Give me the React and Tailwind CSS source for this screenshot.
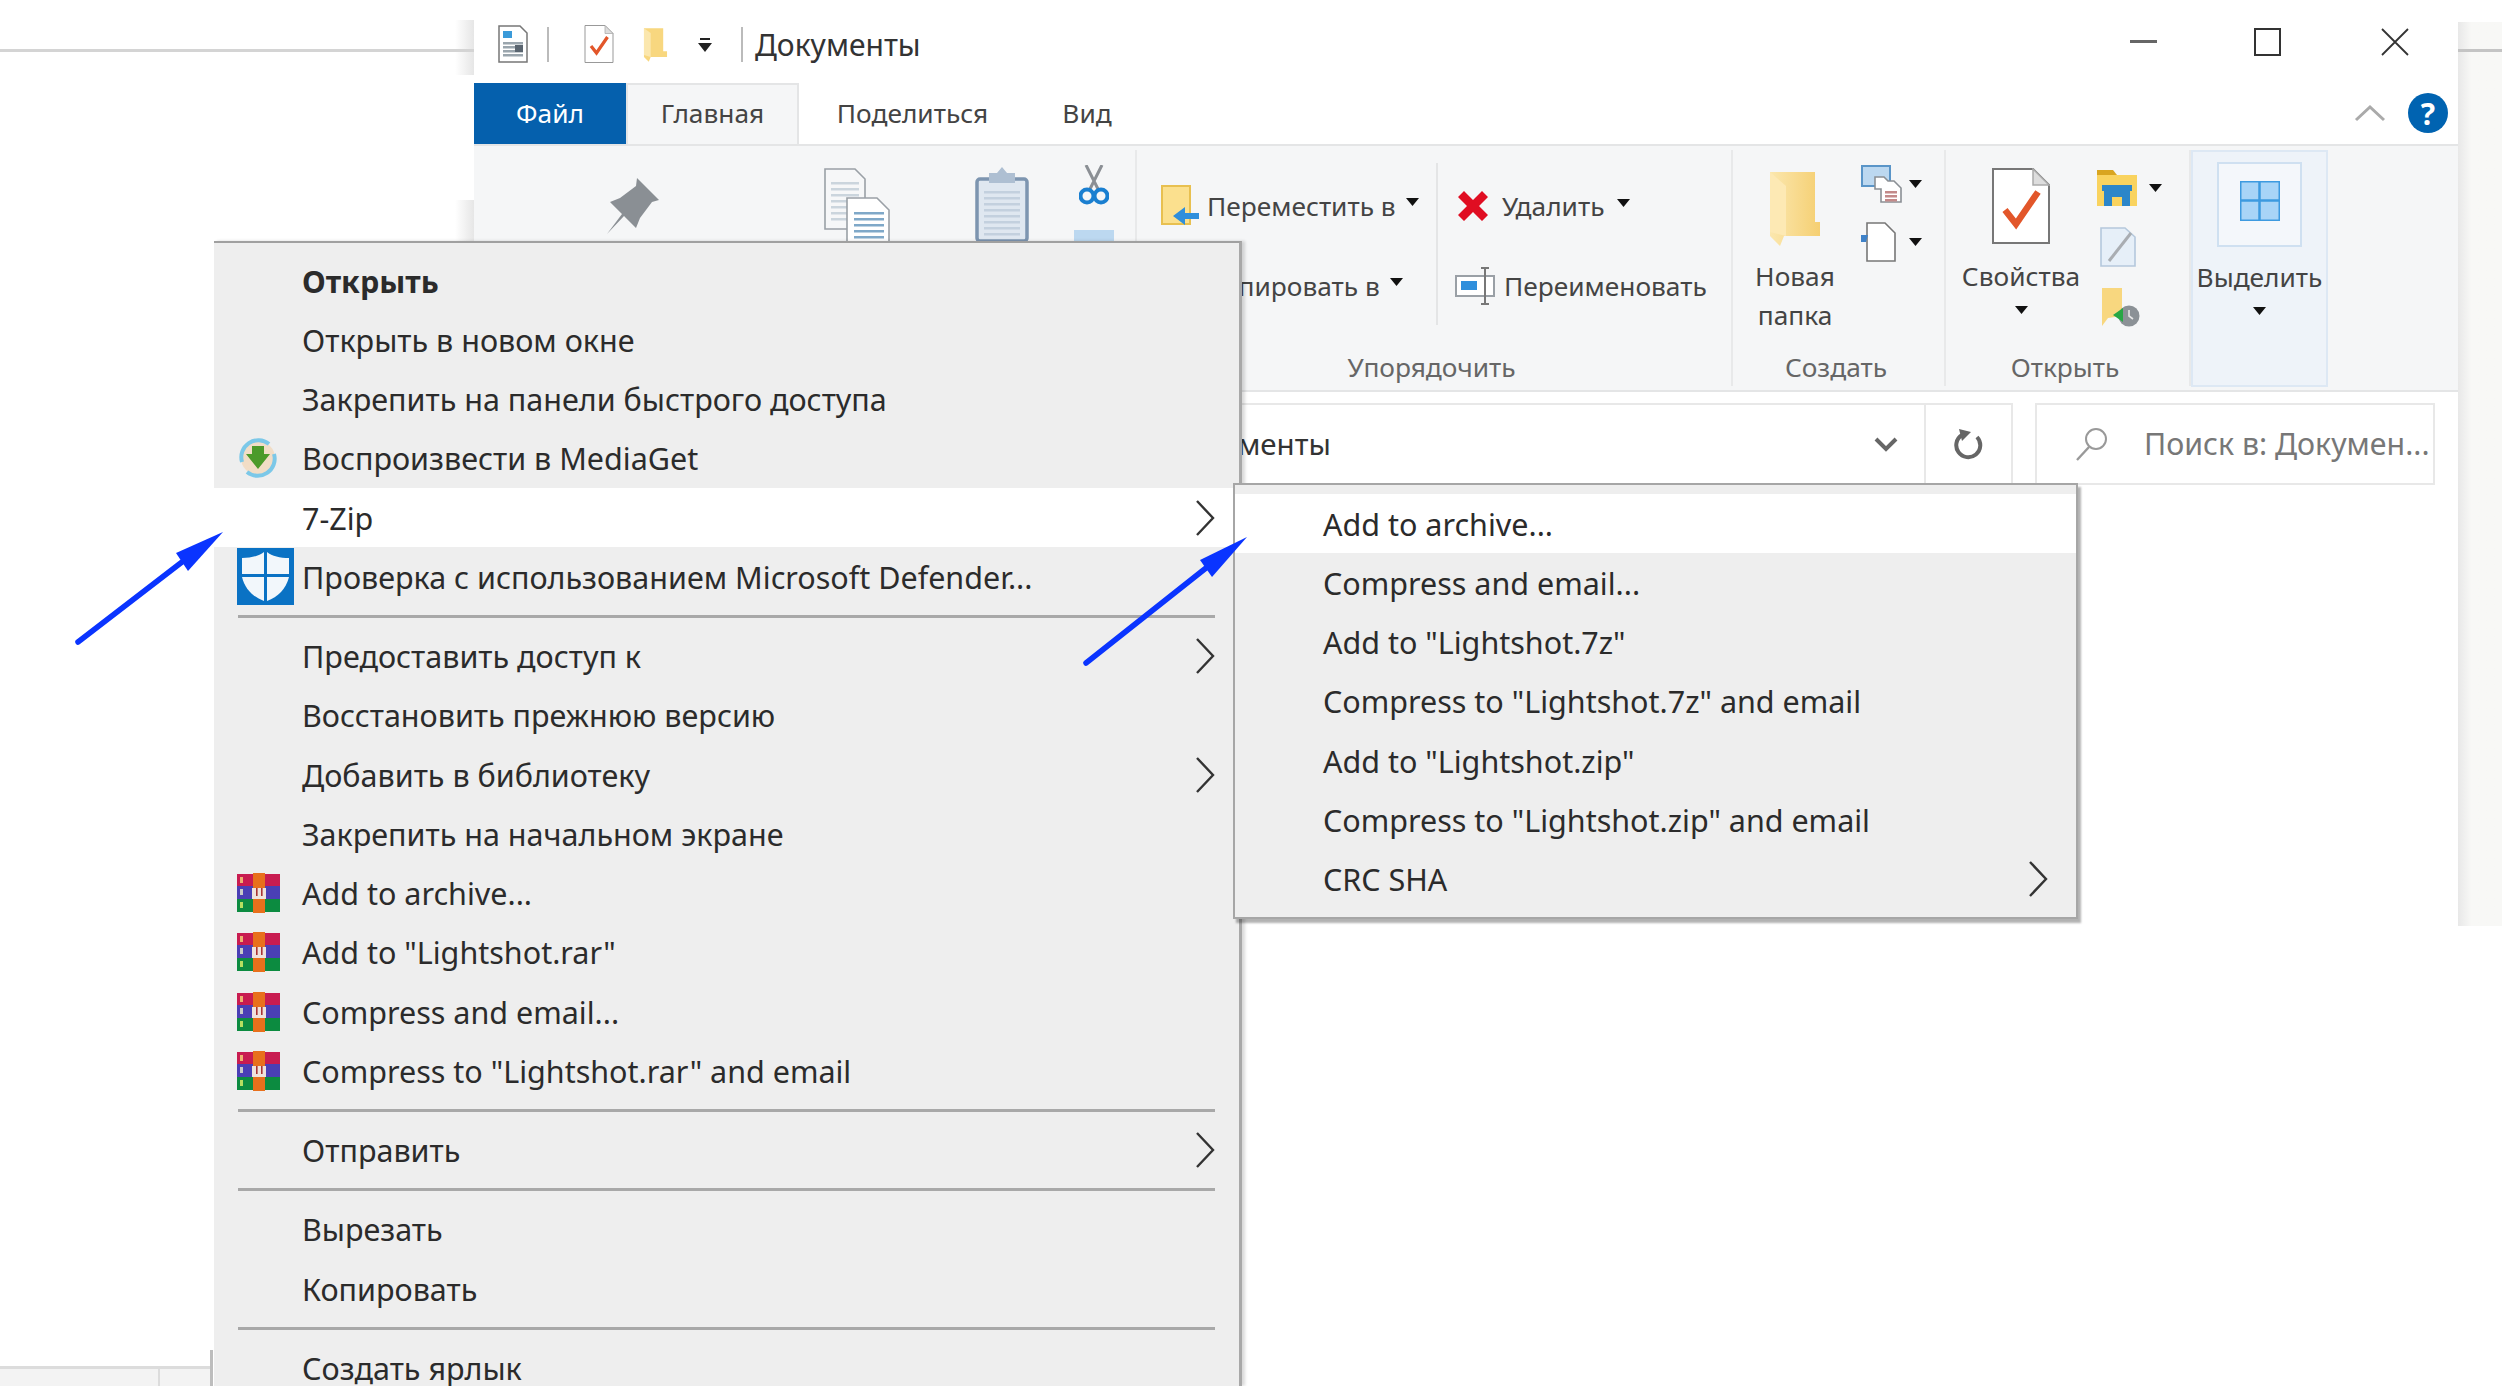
import { Fragment } from 'react';

const Drop = ({ className = '' }) => (
  <svg width="13" height="8" viewBox="0 0 13 8" className={`shrink-0 ${className}`}>
    <path d="M0 0h13L6.5 8z" fill="#111" />
  </svg>
);

const Chevron = ({ className = '' }) => (
  <svg width="20" height="38" viewBox="0 0 20 38" className={`shrink-0 ${className}`}>
    <path d="M2 2l16 17L2 36" fill="none" stroke="#333" strokeWidth="2.4" />
  </svg>
);

const FolderSmall = ({ w = 26, h = 36 }) => (
  <svg width={w} height={h} viewBox="0 0 26 36" className="shrink-0">
    <path d="M1 1h20v24h4v6H8l-2 5-5-5z" fill="#f8d77f" />
    <path d="M1 1l7 5v25l-7-2z" fill="#fbe7ae" />
  </svg>
);

const Doc = ({ w, h, stroke = '#777', children, fill = '#fff' }) => (
  <svg width={w} height={h} viewBox="0 0 58 76" className="shrink-0">
    <path d="M1 1h40l16 16v58H1z" fill={fill} stroke={stroke} strokeWidth="2" />
    <path d="M41 1v16h16z" fill="#ddd" stroke="#aaa" strokeWidth="1.5" />
    {children}
  </svg>
);

const Check = () => <path d="M13 42l11 14 22-32" fill="none" stroke="#e2562a" strokeWidth="6.5" />;

const Lines = ({ x, y, w, n, gap = 6, color = '#7fa8c8' }) => (
  <>
    {Array.from({ length: n }).map((_, i) => (
      <rect key={i} x={x} y={y + i * gap} width={w} height="2.5" fill={color} />
    ))}
  </>
);

const RarIcon = () => (
  <svg width="43" height="40" viewBox="0 0 43 40">
    <rect x="0" y="1" width="43" height="12" fill="#c81c50" />
    <rect x="0" y="13" width="43" height="13" fill="#4a3fb5" />
    <rect x="0" y="26" width="43" height="13" fill="#0c8b40" />
    <rect x="16" y="0" width="12" height="40" fill="#e8701c" />
    <rect x="15" y="15" width="14" height="11" fill="#eee3dc" />
    <rect x="19" y="15" width="1.6" height="8" fill="#a33" />
    <rect x="24" y="15" width="1.6" height="8" fill="#a33" />
    <rect x="3" y="4" width="3" height="6" fill="#eeb070" />
    <rect x="3" y="16" width="3" height="6" fill="#c9c9c9" />
    <rect x="3" y="29" width="3" height="6" fill="#b6df60" />
  </svg>
);

const MediaGetIcon = () => (
  <svg width="42" height="40" viewBox="0 0 42 40">
    <circle cx="21" cy="20" r="17" fill="#f1ddc6" />
    <path d="M5 24A17 17 0 0 1 32 6" fill="none" stroke="#7cc8e8" strokeWidth="4" />
    <path d="M37 16A17 17 0 0 1 10 34" fill="none" stroke="#7cc8e8" strokeWidth="4" />
    <path d="M15 8h12v8h6L21 31 9 16h6z" fill="#4c9a2a" />
  </svg>
);

const DefenderIcon = () => (
  <svg width="57" height="57" viewBox="0 0 57 57">
    <rect width="57" height="57" fill="#0a72c4" />
    <path d="M27 4v22H5V10c9 0 17-2 22-6z" fill="#f2f7fb" />
    <path d="M30 4v22h22V10c-9 0-17-2-22-6z" fill="#f2f7fb" />
    <path d="M5 29h22v24C16 49 8 41 5 29z" fill="#f2f7fb" />
    <path d="M52 29H30v24c11-4 19-12 22-24z" fill="#f2f7fb" />
  </svg>
);

const mainMenu = [
  [
    { label: 'Открыть', bold: true },
    { label: 'Открыть в новом окне' },
    { label: 'Закрепить на панели быстрого доступа' },
    { label: 'Воспроизвести в MediaGet', icon: <MediaGetIcon /> },
    { label: '7-Zip', arrow: true, active: true },
    { label: 'Проверка с использованием Microsoft Defender...', icon: <DefenderIcon /> },
  ],
  [
    { label: 'Предоставить доступ к', arrow: true },
    { label: 'Восстановить прежнюю версию' },
    { label: 'Добавить в библиотеку', arrow: true },
    { label: 'Закрепить на начальном экране' },
    { label: 'Add to archive...', icon: <RarIcon /> },
    { label: 'Add to "Lightshot.rar"', icon: <RarIcon /> },
    { label: 'Compress and email...', icon: <RarIcon /> },
    { label: 'Compress to "Lightshot.rar" and email', icon: <RarIcon /> },
  ],
  [{ label: 'Отправить', arrow: true }],
  [{ label: 'Вырезать' }, { label: 'Копировать' }],
  [{ label: 'Создать ярлык' }],
];

const subMenu = [
  { label: 'Add to archive...', active: true },
  { label: 'Compress and email...' },
  { label: 'Add to "Lightshot.7z"' },
  { label: 'Compress to "Lightshot.7z" and email' },
  { label: 'Add to "Lightshot.zip"' },
  { label: 'Compress to "Lightshot.zip" and email' },
  { label: 'CRC SHA', arrow: true },
];

const MenuRow = ({ item, textLeft, arrowRight }) => (
  <div className={`flex h-[59.25px] items-center ${item.active ? 'bg-white' : ''}`}>
    <div className={`flex shrink-0 items-center pl-[23px] ${textLeft}`}>{item.icon}</div>
    <span className={`whitespace-nowrap leading-[32px] ${item.bold ? 'font-bold' : ''}`}>{item.label}</span>
    {item.arrow && <Chevron className={`ml-auto ${arrowRight}`} />}
  </div>
);

const Group = ({ label, className = '', children }) => (
  <div className={`flex shrink-0 flex-col border-r-2 border-[#e8e9ea] ${className}`}>
    <div className="flex h-[199px] overflow-hidden">{children}</div>
    <div className="flex h-[36px] items-center justify-center pr-[5px] text-[#666]">{label}</div>
  </div>
);

const Tab = ({ children, className = '' }) => (
  <div className={`flex h-[61px] items-center justify-center ${className}`}>{children}</div>
);

const Ribbon = () => (
  <div className="flex h-[248px] border-y-2 border-[#e4e5e6] bg-[#f5f6f7] py-[4px] text-[26.3px] leading-[39px] text-[#444]">
    <Group className="w-[663px]" label="">
      <svg width="54" height="56" viewBox="0 0 54 56" className="ml-[131px] mt-[28px] shrink-0">
        <path d="M32 0l22 22-7 2-12 16-4 10-12-12-17 18 15-20-12-12 10-4 16-12z" fill="#8a8f94" />
      </svg>
      <svg width="66" height="74" viewBox="0 0 66 74" className="ml-[165px] mt-[18px] shrink-0">
        <path d="M1 1h30l10 10v50H1z" fill="#f6f7f8" stroke="#9aa0a6" strokeWidth="1.6" />
        <Lines x={7} y={14} w={28} n={7} color="#cbd5dd" />
        <path d="M23 30h30l12 12v32H23z" fill="#fff" stroke="#9aa0a6" strokeWidth="1.6" />
        <Lines x={30} y={44} w={30} n={5} color="#7fa8c8" />
      </svg>
      <svg width="54" height="74" viewBox="0 0 54 74" className="ml-[85px] mt-[17px] shrink-0">
        <rect x="2" y="12" width="50" height="62" rx="3" fill="#dfe7f0" stroke="#7d95b0" strokeWidth="3.5" />
        <path d="M14 6h8l5-6 5 6h8v10H14z" fill="#aebfd2" />
        <Lines x={9} y={24} w={36} n={8} color="#c3d0de" />
      </svg>
      <div className="ml-[45px] mt-[15px] flex w-[40px] shrink-0 flex-col items-center">
        <svg width="30" height="40" viewBox="0 0 30 40">
          <path d="M7 0l12 24M23 0L11 24" stroke="#8b8f94" strokeWidth="3" />
          <circle cx="8" cy="31" r="6.5" fill="none" stroke="#1a7fd0" strokeWidth="4" />
          <circle cx="22" cy="31" r="6.5" fill="none" stroke="#1a7fd0" strokeWidth="4" />
        </svg>
        <div className="mt-[25px] h-[14px] w-[40px] bg-[#bcd8f0]" />
      </div>
    </Group>

    <Group className="w-[596px]" label="Упорядочить">
      <div className="flex w-[299px] shrink-0 flex-col pl-[24px] pt-[16px]">
        <div className="flex h-[80px] items-center">
          <svg width="38" height="42" viewBox="0 0 38 42" className="shrink-0">
            <rect x="1" y="1" width="28" height="38" fill="#fbe08e" stroke="#e8c050" strokeWidth="2" />
            <path d="M38 28H24v-6L12 31l12 9v-6h14z" fill="#2f8fdc" />
          </svg>
          <span className="ml-[8px] whitespace-nowrap">Переместить в</span>
          <Drop className="ml-[10px] -translate-y-[4px]" />
        </div>
        <div className="flex h-[80px] items-center">
          <FolderSmall w={38} h={38} />
          <span className="ml-[8px] whitespace-nowrap">Копировать в</span>
          <Drop className="ml-[10px] -translate-y-[4px]" />
        </div>
      </div>
      <div className="mt-[13px] h-[162px] w-[2px] shrink-0 bg-[#e4e5e6]" />
      <div className="flex flex-col pl-[17px] pt-[16px]">
        <div className="flex h-[80px] items-center">
          <svg width="36" height="34" viewBox="0 0 36 34" className="shrink-0">
            <path d="M3 8l6-6 9 9 9-9 6 6-9 9 9 9-6 6-9-9-9 9-6-6 9-9z" fill="#e00d22" />
          </svg>
          <span className="ml-[11px] whitespace-nowrap">Удалить</span>
          <Drop className="ml-[13px] -translate-y-[3px]" />
        </div>
        <div className="flex h-[80px] items-center">
          <svg width="40" height="38" viewBox="0 0 40 38" className="shrink-0">
            <rect x="1" y="9" width="38" height="20" fill="#fff" stroke="#9aa0a6" strokeWidth="2" />
            <rect x="6" y="14" width="16" height="9" fill="#2f8fdc" />
            <path d="M26 1h8M30 1v36M26 37h8" stroke="#777" strokeWidth="2" fill="none" />
          </svg>
          <span className="ml-[9px] whitespace-nowrap">Переименовать</span>
        </div>
      </div>
    </Group>

    <Group className="w-[213px]" label="Создать">
      <div className="flex w-[124px] shrink-0 flex-col items-center pt-[22px]">
        <svg width="50" height="74" viewBox="0 0 50 74" className="shrink-0">
          <defs>
            <linearGradient id="newFolder" x1="0" x2="1">
              <stop offset="0" stopColor="#fbe7ae" />
              <stop offset="1" stopColor="#f5cf72" />
            </linearGradient>
          </defs>
          <path d="M0 0h45v50h5v14H14l-4 10-10-10z" fill="url(#newFolder)" />
          <path d="M0 0l16 14v50l-16-4z" fill="#fde9b4" />
        </svg>
        <span className="mt-[11px] text-center">Новая<br />папка</span>
      </div>
      <div className="flex flex-col pl-[4px] pt-[15px]">
        <div className="flex items-center">
          <svg width="41" height="38" viewBox="0 0 41 38" className="shrink-0">
            <rect x="1" y="1" width="28" height="20" fill="#bcd8f0" stroke="#5a95c8" strokeWidth="2" />
            <path d="M14 12h9l4 4h6l7 7v14H20V24h-6z" fill="#fff" stroke="#8a8f94" strokeWidth="1.6" />
            <Lines x={24} y={26} w={12} n={3} gap={4} color="#c38a8a" />
          </svg>
          <Drop className="ml-[7px]" />
        </div>
        <div className="mt-[19px] flex items-center">
          <svg width="36" height="40" viewBox="0 0 36 40" className="shrink-0">
            <path d="M6 1h18l10 10v28H6z" fill="#fff" stroke="#777" strokeWidth="1.6" />
            <path d="M0 13h7l-2 7H0z" fill="#3f82c8" />
          </svg>
          <Drop className="ml-[12px]" />
        </div>
      </div>
    </Group>

    <Group className="w-[245px]" label="Открыть">
      <div className="flex w-[150px] shrink-0 flex-col items-center pt-[18px]">
        <Doc w={58} h={76}><Check /></Doc>
        <span className="mt-[13px]">Свойства</span>
        <Drop className="mt-[10px]" />
      </div>
      <div className="flex flex-col pl-[1px] pt-[20px]">
        <div className="flex items-center">
          <svg width="40" height="36" viewBox="0 0 40 36" className="shrink-0">
            <path d="M0 0h16l4 5H0z" fill="#d9a520" />
            <rect y="5" width="40" height="31" fill="#f9d35f" />
            <path d="M7 20h26v16h-8v-9h-10v9H7z" fill="#2c86c9" />
            <rect x="5" y="15" width="30" height="6" fill="#2c86c9" />
          </svg>
          <Drop className="ml-[12px]" />
        </div>
        <svg width="36" height="40" viewBox="0 0 36 40" className="ml-[3px] mt-[21px] shrink-0">
          <path d="M1 1h24l10 9v29H1z" fill="#e6eff8" stroke="#b5c8dc" strokeWidth="1.6" />
          <path d="M31 6L9 34" stroke="#a9adb2" strokeWidth="3" />
        </svg>
        <svg width="38" height="40" viewBox="0 0 38 40" className="ml-[5px] mt-[21px] shrink-0">
          <path d="M0 0h20v28l-14 2-6 8z" fill="#f8d77f" />
          <circle cx="27" cy="28" r="10.5" fill="#8b9196" />
          <path d="M27 22v6l4 3" stroke="#e6e6e6" strokeWidth="1.6" fill="none" />
          <path d="M21 20v14l-10-7z" fill="#28a745" />
        </svg>
      </div>
    </Group>

    <div className="flex h-[237px] w-[137px] shrink-0 flex-col items-center border-2 border-[#dde8f4] bg-[#eef3f9]">
      <div className="mt-[10px] flex h-[85px] w-[85px] shrink-0 items-center justify-center border-2 border-[#cfe0f1] bg-[#f4f7fb] pb-[8px]">
        <svg width="40" height="40" viewBox="0 0 40 40">
          <rect width="40" height="40" fill="#a8d4f7" />
          <path d="M19.5 0v40M0 19.5h40" stroke="#3d9ae0" strokeWidth="2.5" />
          <rect x="0.75" y="0.75" width="38.5" height="38.5" fill="none" stroke="#3d9ae0" strokeWidth="1.5" />
        </svg>
      </div>
      <span className="mt-[11px]">Выделить</span>
      <Drop className="mt-[10px]" />
    </div>
  </div>
);

const AddressRow = () => (
  <div className="mt-[11px] flex h-[82px] text-[29.5px]">
    <div className="ml-[325px] flex h-full w-[1214px] items-center border-2 border-[#e8e8e8]">
      <span className="ml-[367px] text-[#333]">Документы</span>
      <svg width="26" height="16" viewBox="0 0 26 16" className="ml-auto mr-[25px] shrink-0">
        <path d="M3 3l10 10L23 3" fill="none" stroke="#666" strokeWidth="4" />
      </svg>
      <div className="flex h-full w-[87px] shrink-0 items-center justify-center border-l-2 border-[#e8e8e8]">
        <svg width="30" height="32" viewBox="0 0 30 32">
          <path d="M8 7a12 12 0 1 0 15 2" fill="none" stroke="#666" strokeWidth="4" />
          <path d="M5 1l12 3-9 9z" fill="#666" />
        </svg>
      </div>
    </div>
    <div className="ml-[22px] flex h-full w-[400px] items-center border-2 border-[#e8e8e8]">
      <svg width="34" height="34" viewBox="0 0 34 34" className="ml-[38px] shrink-0">
        <circle cx="21" cy="12" r="10" fill="none" stroke="#999" strokeWidth="2" />
        <path d="M14 20L2 33" stroke="#999" strokeWidth="2.4" />
      </svg>
      <span className="ml-[35px] whitespace-nowrap text-[30.3px] text-[#777]">Поиск в: Докумен...</span>
    </div>
  </div>
);

const ExplorerWindow = () => (
  <div className="absolute left-[474px] top-[13px] flex h-[913px] w-[1984px] flex-col bg-white text-[26.3px]">
    <div className="flex h-[70px] items-center pb-[8px]">
      <svg width="30" height="38" viewBox="0 0 30 38" className="ml-[24px] shrink-0">
        <path d="M1 1h21l7 7v29H1z" fill="#fff" stroke="#777" strokeWidth="1.5" />
        <rect x="5" y="6" width="9" height="7" fill="#3a9ad9" />
        <Lines x={5} y={17} w={20} n={4} gap={4} color="#9aa5ad" />
        <rect x="17" y="20" width="8" height="7" fill="#5a6570" />
      </svg>
      <div className="ml-[19px] h-[35px] w-[2px] bg-[#bbb]" />
      <div className="ml-[35px]">
        <Doc w={30} h={38} stroke="#999"><Check /></Doc>
      </div>
      <div className="ml-[29px]"><FolderSmall w={25} h={35} /></div>
      <svg width="14" height="15" viewBox="0 0 14 15" className="ml-[30px] shrink-0">
        <path d="M2 1h10v2H2zM0 6h14l-7 9z" fill="#222" />
      </svg>
      <div className="ml-[29px] h-[35px] w-[2px] bg-[#bbb]" />
      <span className="ml-[12px] text-[30px] text-[#333]">Документы</span>
      <svg width="27" height="4" viewBox="0 0 27 4" className="ml-auto -translate-y-[2px] shrink-0">
        <rect width="27" height="3" y="0" fill="#666" />
      </svg>
      <svg width="27" height="28" viewBox="0 0 27 28" className="ml-[97px] -translate-y-[2px] shrink-0">
        <rect x="1" y="1" width="25" height="26" fill="none" stroke="#333" strokeWidth="2" />
      </svg>
      <svg width="28" height="28" viewBox="0 0 28 28" className="ml-[100px] mr-[49px] -translate-y-[2px] shrink-0">
        <path d="M1 1l26 26M27 1L1 27" stroke="#333" strokeWidth="1.8" />
      </svg>
    </div>

    <div className="flex h-[61px] text-[#444]">
      <Tab className="w-[152px] bg-[#0560ad] text-white">Файл</Tab>
      <Tab className="z-10 w-[173px] border-x-2 border-t-2 border-[#e4e5e6] bg-[#f5f6f7] pb-[2px]">Главная</Tab>
      <Tab className="w-[227px]">Поделиться</Tab>
      <Tab className="w-[122px]">Вид</Tab>
      <svg width="32" height="18" viewBox="0 0 32 18" className="ml-auto mt-[21px] shrink-0">
        <path d="M2 16L16 3l14 13" fill="none" stroke="#aaa" strokeWidth="3" />
      </svg>
      <div className="ml-[22px] mr-[10px] mt-[10px] flex h-[40px] w-[40px] items-center justify-center rounded-full bg-[#0063b1] text-[30px] font-bold text-white">?</div>
    </div>

    <Ribbon />
    <AddressRow />
  </div>
);

const Backdrop = () => (
  <>
    <div className="absolute left-[455px] top-[20px] h-[55px] w-[19px] bg-gradient-to-r from-white to-[#e6e6e6]" />
    <div className="absolute left-[455px] top-[200px] h-[50px] w-[19px] bg-gradient-to-r from-white to-[#e6e6e6]" />
    <div className="absolute left-0 top-[49px] h-[3px] w-[474px] bg-[#d4d4d4]" />
    <div className="absolute left-[2458px] top-[22px] h-[904px] w-[44px] bg-gradient-to-r from-[#e8e8e8] to-[#f8f8f6] to-30%" />
    <div className="absolute left-[2458px] top-[49px] h-[3px] w-[44px] bg-[#c4c4c4]" />
    <div className="absolute left-0 top-[1366px] h-[20px] w-[210px] border-t-[3px] border-[#dcdcdc] bg-[#f3f3f3]" />
    <div className="absolute left-[158px] top-[1368px] h-[18px] w-[2px] bg-[#dcdcdc]" />
    <div className="absolute left-[210px] top-[1350px] h-[36px] w-[3px] bg-[#bdbdbd]" />
  </>
);

const ContextMenu = () => (
  <div className="absolute bottom-0 left-[214px] top-[241px] w-[1028px] border-r-[3px] border-t-2 border-r-[#a8a8a8] border-t-[#a0a0a0] bg-[#eeeeee] pt-[8px] text-[#2b2b2b] shadow-[3px_0_3px_rgba(0,0,0,0.15)]">
    {mainMenu.map((section, i) => (
      <Fragment key={i}>
        {i > 0 && (
          <div className="flex h-[20px] items-center px-[24px]">
            <div className="h-[3px] w-full bg-[#a8a8a8]" />
          </div>
        )}
        {section.map(item => (
          <MenuRow key={item.label} item={item} textLeft="w-[88px]" arrowRight="mr-[24px]" />
        ))}
      </Fragment>
    ))}
  </div>
);

const SubMenu = () => (
  <div className="absolute left-[1233px] top-[483px] h-[436px] w-[845px] border-2 border-[#a6a6a6] bg-[#eeeeee] pt-[9px] text-[#2b2b2b] shadow-[3px_4px_2px_rgba(0,0,0,0.3)]">
    {subMenu.map(item => (
      <MenuRow key={item.label} item={item} textLeft="w-[88px]" arrowRight="mr-[28px]" />
    ))}
  </div>
);

const Arrows = () => (
  <svg width="2502" height="1386" viewBox="0 0 2502 1386" className="pointer-events-none absolute left-0 top-0">
    <path d="M78 642L182 562" stroke="#0a34ff" strokeWidth="5.5" strokeLinecap="round" />
    <path d="M223 532L176 553l12 18z" fill="#0a34ff" />
    <path d="M1086 663L1206 568" stroke="#0a34ff" strokeWidth="5.5" strokeLinecap="round" />
    <path d="M1247 537L1200 560l12 17z" fill="#0a34ff" />
  </svg>
);

export default function App() {
  return (
    <div className="relative h-[1386px] w-[2502px] overflow-hidden bg-white font-['Noto_Sans',sans-serif]">
      <Backdrop />
      <ExplorerWindow />
      <div className="text-[30.5px]">
        <ContextMenu />
        <SubMenu />
      </div>
      <Arrows />
    </div>
  );
}
